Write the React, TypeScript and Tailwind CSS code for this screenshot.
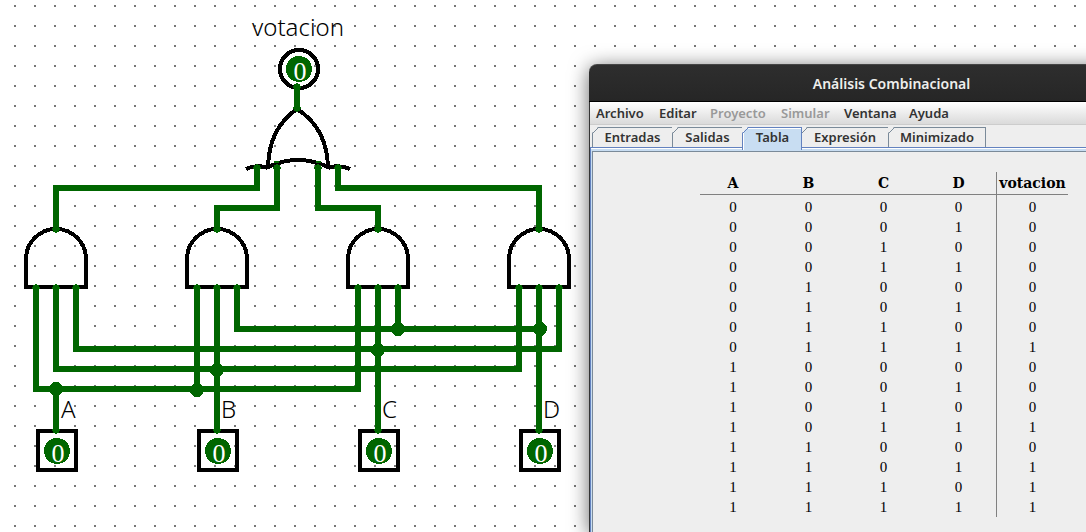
import React, { useState } from "react";

const GREEN = "#006600";

const gates = [56, 217, 378, 539];

const inputs = [
  { name: "A", x: 56, labelX: 61 },
  { name: "B", x: 217, labelX: 221 },
  { name: "C", x: 378, labelX: 382 },
  { name: "D", x: 539, labelX: 543 },
];

const wires = [
  "M56 230V188H257V167",
  "M217 230V208H277V167",
  "M378 230V208H318V167",
  "M539 230V188H338V167",
  "M297 87V109",
  "M36 288V389H358V288",
  "M56 288V369H519V288",
  "M76 288V349H559V288",
  "M237 288V329H539",
  "M197 288V389",
  "M398 288V329",
  "M56 389V431",
  "M217 288V431",
  "M378 288V431",
  "M539 288V431",
];

const junctions = [
  [56, 389],
  [197, 390],
  [217, 370],
  [378, 350],
  [398, 329],
  [540, 329],
];

const terminals = [
  [297, 87],
  [297, 108],
  [257, 168],
  [277, 168],
  [318, 168],
  [338, 168],
  ...gates.flatMap((x) => [
    [x, 229],
    [x - 20, 288],
    [x, 288],
    [x + 20, 288],
    [x, 430],
  ]),
];

function Circuit() {
  return (
    <svg
      className="block h-screen w-full"
      role="img"
      aria-label="votacion"
      shapeRendering="crispEdges"
    >
      <defs>
        <pattern id="grid" x="14" y="5" width="20" height="20" patternUnits="userSpaceOnUse">
          <rect width="2" height="2" fill="#777777" />
        </pattern>
      </defs>
      <rect width="100%" height="100%" fill="#ffffff" />
      <rect width="100%" height="100%" fill="url(#grid)" />

      <g fill="none" stroke={GREEN} strokeWidth="6">
        {wires.map((d) => (
          <path key={d} d={d} />
        ))}
      </g>

      <g fill="none" stroke="#000000" strokeWidth="4">
        {gates.map((x) => (
          <path key={x} d={`M${x - 30} 287V259a30 30 0 0 1 60 0V287Z`} />
        ))}
        <path d="M297 109Q269 128 268 167Q298 153 328 167Q327 128 297 109Z" />
        <path d="M246 169Q257 164 268 168" />
        <path d="M328 168Q339 164 350 169" />
        <circle cx="299" cy="69" r="19" />
        {inputs.map((pin) => (
          <rect key={pin.name} x={pin.x - 18} y="431" width="38" height="39" />
        ))}
      </g>

      <g fill={GREEN}>
        {terminals.map(([x, y]) => (
          <circle key={`${x}-${y}`} cx={x} cy={y} r="3.6" />
        ))}
        {junctions.map(([x, y]) => (
          <circle key={`${x}-${y}`} cx={x} cy={y} r="7" />
        ))}
        <rect x="274" y="161" width="5" height="2" />
        <rect x="316" y="161" width="5" height="2" />
        <circle cx="299" cy="69" r="13" />
        {inputs.map((pin) => (
          <circle key={pin.name} cx={pin.x + 1} cy="451" r="13" />
        ))}
      </g>

      <g className="fill-white font-['Liberation_Serif',serif] text-[26px]" textAnchor="middle">
        <text x="300" y="80">0</text>
        {inputs.map((pin) => (
          <text key={pin.name} x={pin.x + 2} y="462">0</text>
        ))}
      </g>

      <g className="fill-black font-['Noto_Sans','Open_Sans',sans-serif] text-2xl font-light">
        <text x="298" y="36" textAnchor="middle">votacion</text>
        {inputs.map((pin) => (
          <text key={pin.name} x={pin.labelX} y="418">{pin.name}</text>
        ))}
      </g>
    </svg>
  );
}

const menus = [
  { label: "Archivo", width: "w-[63px]" },
  { label: "Editar", width: "w-[51px]" },
  { label: "Proyecto", width: "w-[71px]", disabled: true },
  { label: "Simular", width: "w-[63px]", disabled: true },
  { label: "Ventana", width: "w-[65px]" },
  { label: "Ayuda", width: "w-[52px]" },
];

const tabs = [
  { label: "Entradas", width: "w-[81px]" },
  { label: "Salidas", width: "w-[71px]" },
  { label: "Tabla", width: "w-[60px]" },
  { label: "Expresión", width: "w-[88px]" },
  { label: "Minimizado", width: "w-[98px]" },
];

function Tab({
  label,
  width,
  selected,
  onSelect,
}: {
  label: string;
  width: string;
  selected: boolean;
  onSelect: () => void;
}) {
  const tone = selected
    ? "z-10 h-[23px] border-[#6382bf] bg-[#c8ddf2]"
    : "h-5 border-[#7a8a99] bg-[#eeeeee]";
  return (
    <button
      type="button"
      role="tab"
      aria-selected={selected}
      onClick={onSelect}
      className={`${width} ${tone} relative -mr-px shrink-0 border border-b-0 text-center leading-[19px]`}
    >
      <span className={selected ? "block h-[22px] border-l border-t border-white leading-[17px]" : "block"}>{label}</span>
      <svg className="absolute -left-px -top-px" width="7" height="7" aria-hidden="true">
        <path d="M0 0H6L0 6Z" fill="#eeeeee" />
        <path d="M0.5 6.5L6.5 0.5" stroke={selected ? "#6382bf" : "#7a8a99"} />
      </svg>
    </button>
  );
}

const columns = ["A", "B", "C", "D"];
const rows = Array.from({ length: 16 }, (_, i) => {
  const bits = [8, 4, 2, 1].map((mask) => (i & mask ? 1 : 0));
  const votes = bits.reduce<number>((sum, bit) => sum + bit, 0);
  return { bits, result: votes >= 3 ? 1 : 0 };
});

function TruthTable() {
  return (
    <table className="ml-[107px] mt-5 table-fixed border-separate border-spacing-0 text-center font-['DejaVu_Serif',serif] text-sm text-black">
      <colgroup>
        <col className="w-[71px]" />
        <col className="w-[75px]" />
        <col className="w-[75px]" />
        <col className="w-[75px]" />
        <col className="w-[72px]" />
      </colgroup>
      <thead>
        <tr className="h-[23px]">
          {columns.map((name) => (
            <th
              key={name}
              scope="col"
              className="border-b border-[#808080] p-0 leading-[22px] first:pr-[5px]"
            >
              {name}
            </th>
          ))}
          <th scope="col" className="border-b border-l border-[#808080] p-0 leading-[22px]">
            votacion
          </th>
        </tr>
      </thead>
      <tbody className="font-['Liberation_Serif',serif] text-[15px] font-normal">
        {rows.map((row, r) => (
          <tr key={r} className="h-5 align-bottom first:h-[22px]">
            {row.bits.map((bit, c) => (
              <td key={c} className="p-0 leading-5 first:pr-[5px]">
                {bit}
              </td>
            ))}
            <td className="border-l border-[#808080] p-0 leading-5">{row.result}</td>
          </tr>
        ))}
      </tbody>
    </table>
  );
}

function AnalysisWindow() {
  const [active, setActive] = useState("Tabla");
  return (
    <section
      aria-label="Análisis Combinacional"
      className="absolute -right-[108px] bottom-0 left-[589px] top-16 flex flex-col rounded-t-lg bg-[#eeeeee] font-['Noto_Sans',sans-serif] text-[13px] font-semibold text-[#333333] shadow-[0_3px_20px_rgba(0,0,0,0.6)]"
    >
      <header className="flex h-[38px] items-center justify-center rounded-t-lg border-b border-t border-b-black border-t-[#454545] bg-linear-to-b from-[#2e2e2e] to-[#262626] pt-0.5">
        <h1 className="text-sm font-semibold text-[#eeeeec]">Análisis Combinacional</h1>
      </header>
      <div className="flex grow flex-col border-l border-[#333333]">
        <nav className="flex h-[23px] border-b border-[#cccccc] bg-linear-to-b from-white to-[#dadada] pl-1.5">
          {menus.map((menu) => (
            <button
              key={menu.label}
              type="button"
              disabled={menu.disabled}
              className={`${menu.width} text-left leading-[20px] disabled:text-[#999999]`}
            >
              {menu.label}
            </button>
          ))}
        </nav>
        <div role="tablist" className="flex h-[22px] items-start pl-0.5 pt-0.5">
          {tabs.map((tab) => (
            <Tab
              key={tab.label}
              label={tab.label}
              width={tab.width}
              selected={active === tab.label}
              onSelect={() => setActive(tab.label)}
            />
          ))}
        </div>
        <div className="flex grow flex-col border-l border-t border-[#6382bf]">
          <div className="flex grow flex-col border-t border-white bg-[#c8ddf2] pl-px pt-0.5">
            <div className="grow border-l border-t border-[#7a8a99] bg-[#eeeeee]">
              <TruthTable />
            </div>
          </div>
        </div>
      </div>
    </section>
  );
}

export default function App() {
  return (
    <main className="relative h-screen overflow-hidden bg-white">
      <Circuit />
      <AnalysisWindow />
    </main>
  );
}
